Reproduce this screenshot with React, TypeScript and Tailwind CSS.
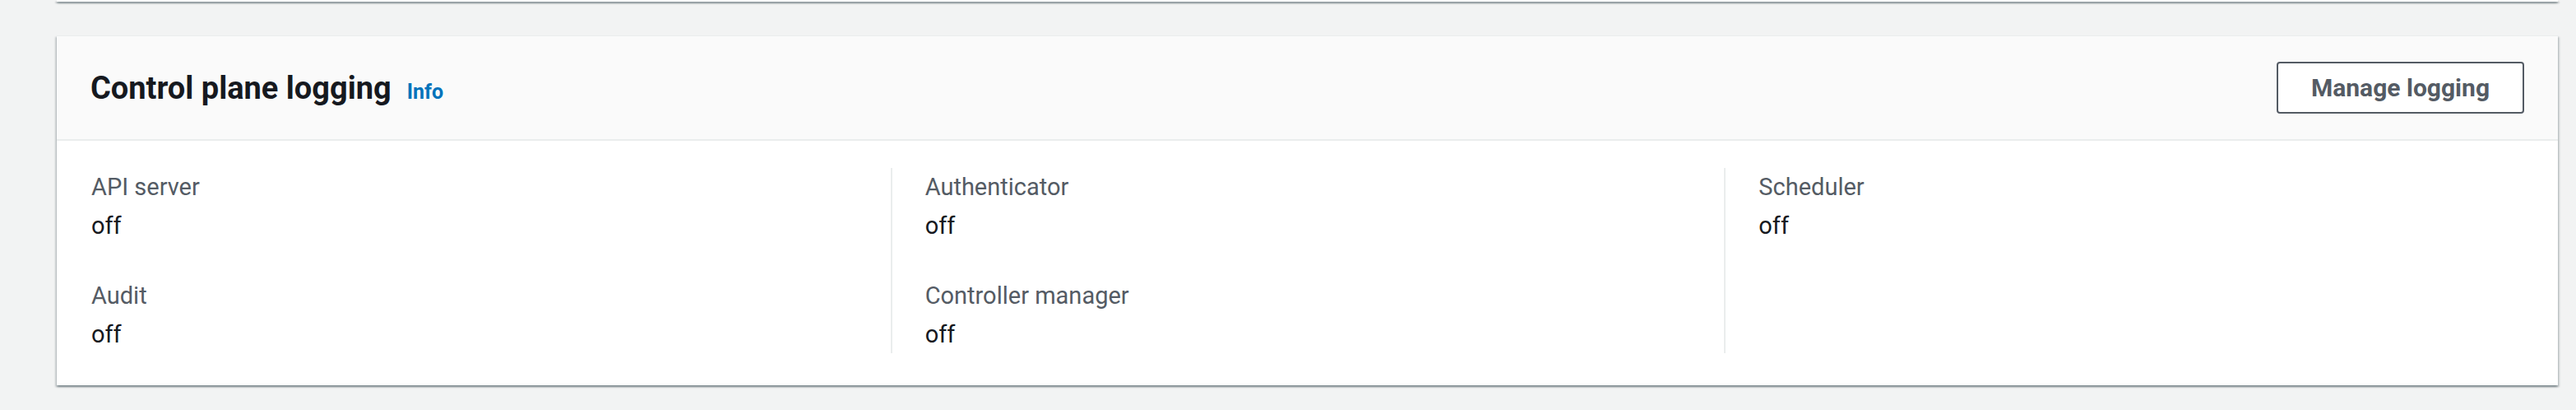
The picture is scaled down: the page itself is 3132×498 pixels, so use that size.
import React from "react";

const font = { fontFamily: "Roboto, 'Noto Sans', Arial, sans-serif" };

function Item({ label, value }: { label: string; value: string }) {
  return (
    <div className="flex flex-col">
      <div className="text-[29px] leading-[46px] text-[#545b64]">{label}</div>
      <div className="mt-[2px] text-[29px] leading-[45px] text-[#16191f]">{value}</div>
    </div>
  );
}

export default function App() {
  return (
    <div
      className="min-h-[498px] w-full bg-[#f2f3f3] pl-[69px] pr-[22px]"
      style={font}
    >
      <div className="h-[2px] bg-white shadow-[0_2px_2px_0_rgba(0,28,36,0.3),2px_2px_2px_0_rgba(0,28,36,0.15),-2px_2px_2px_0_rgba(0,28,36,0.15)]" />
      <div className="mt-[41px] border-t border-[#eaeded] bg-white shadow-[0_2px_2px_0_rgba(0,28,36,0.3),2px_2px_2px_0_rgba(0,28,36,0.15),-2px_2px_2px_0_rgba(0,28,36,0.15)]">
        <div className="flex h-[127px] items-center justify-between border-b-2 border-[#eaeded] bg-[#fafafa] pl-[41px] pr-[41px]">
          <div className="flex items-baseline gap-[19px]">
            <h2 className="text-[38px] font-bold leading-[44px] text-[#16191f]">
              Control plane logging
            </h2>
            <a className="text-[25px] font-bold leading-[30px] text-[#0073bb]">Info</a>
          </div>
          <button className="flex h-[63px] w-[301px] items-center justify-center rounded-[4px] border-2 border-[#545b64] bg-white text-[30px] font-bold text-[#545b64]">
            Manage logging
          </button>
        </div>
        <div className="grid grid-cols-3 pb-[39px] pt-[33px]">
          <div className="flex flex-col gap-[39px] pl-[42px]">
            <Item label="API server" value="off" />
            <Item label="Audit" value="off" />
          </div>
          <div className="flex flex-col gap-[39px] border-l-2 border-[#eaeded] pl-[40px]">
            <Item label="Authenticator" value="off" />
            <Item label="Controller manager" value="off" />
          </div>
          <div className="flex flex-col gap-[39px] border-l-2 border-[#eaeded] pl-[40px]">
            <Item label="Scheduler" value="off" />
          </div>
        </div>
      </div>
    </div>
  );
}
